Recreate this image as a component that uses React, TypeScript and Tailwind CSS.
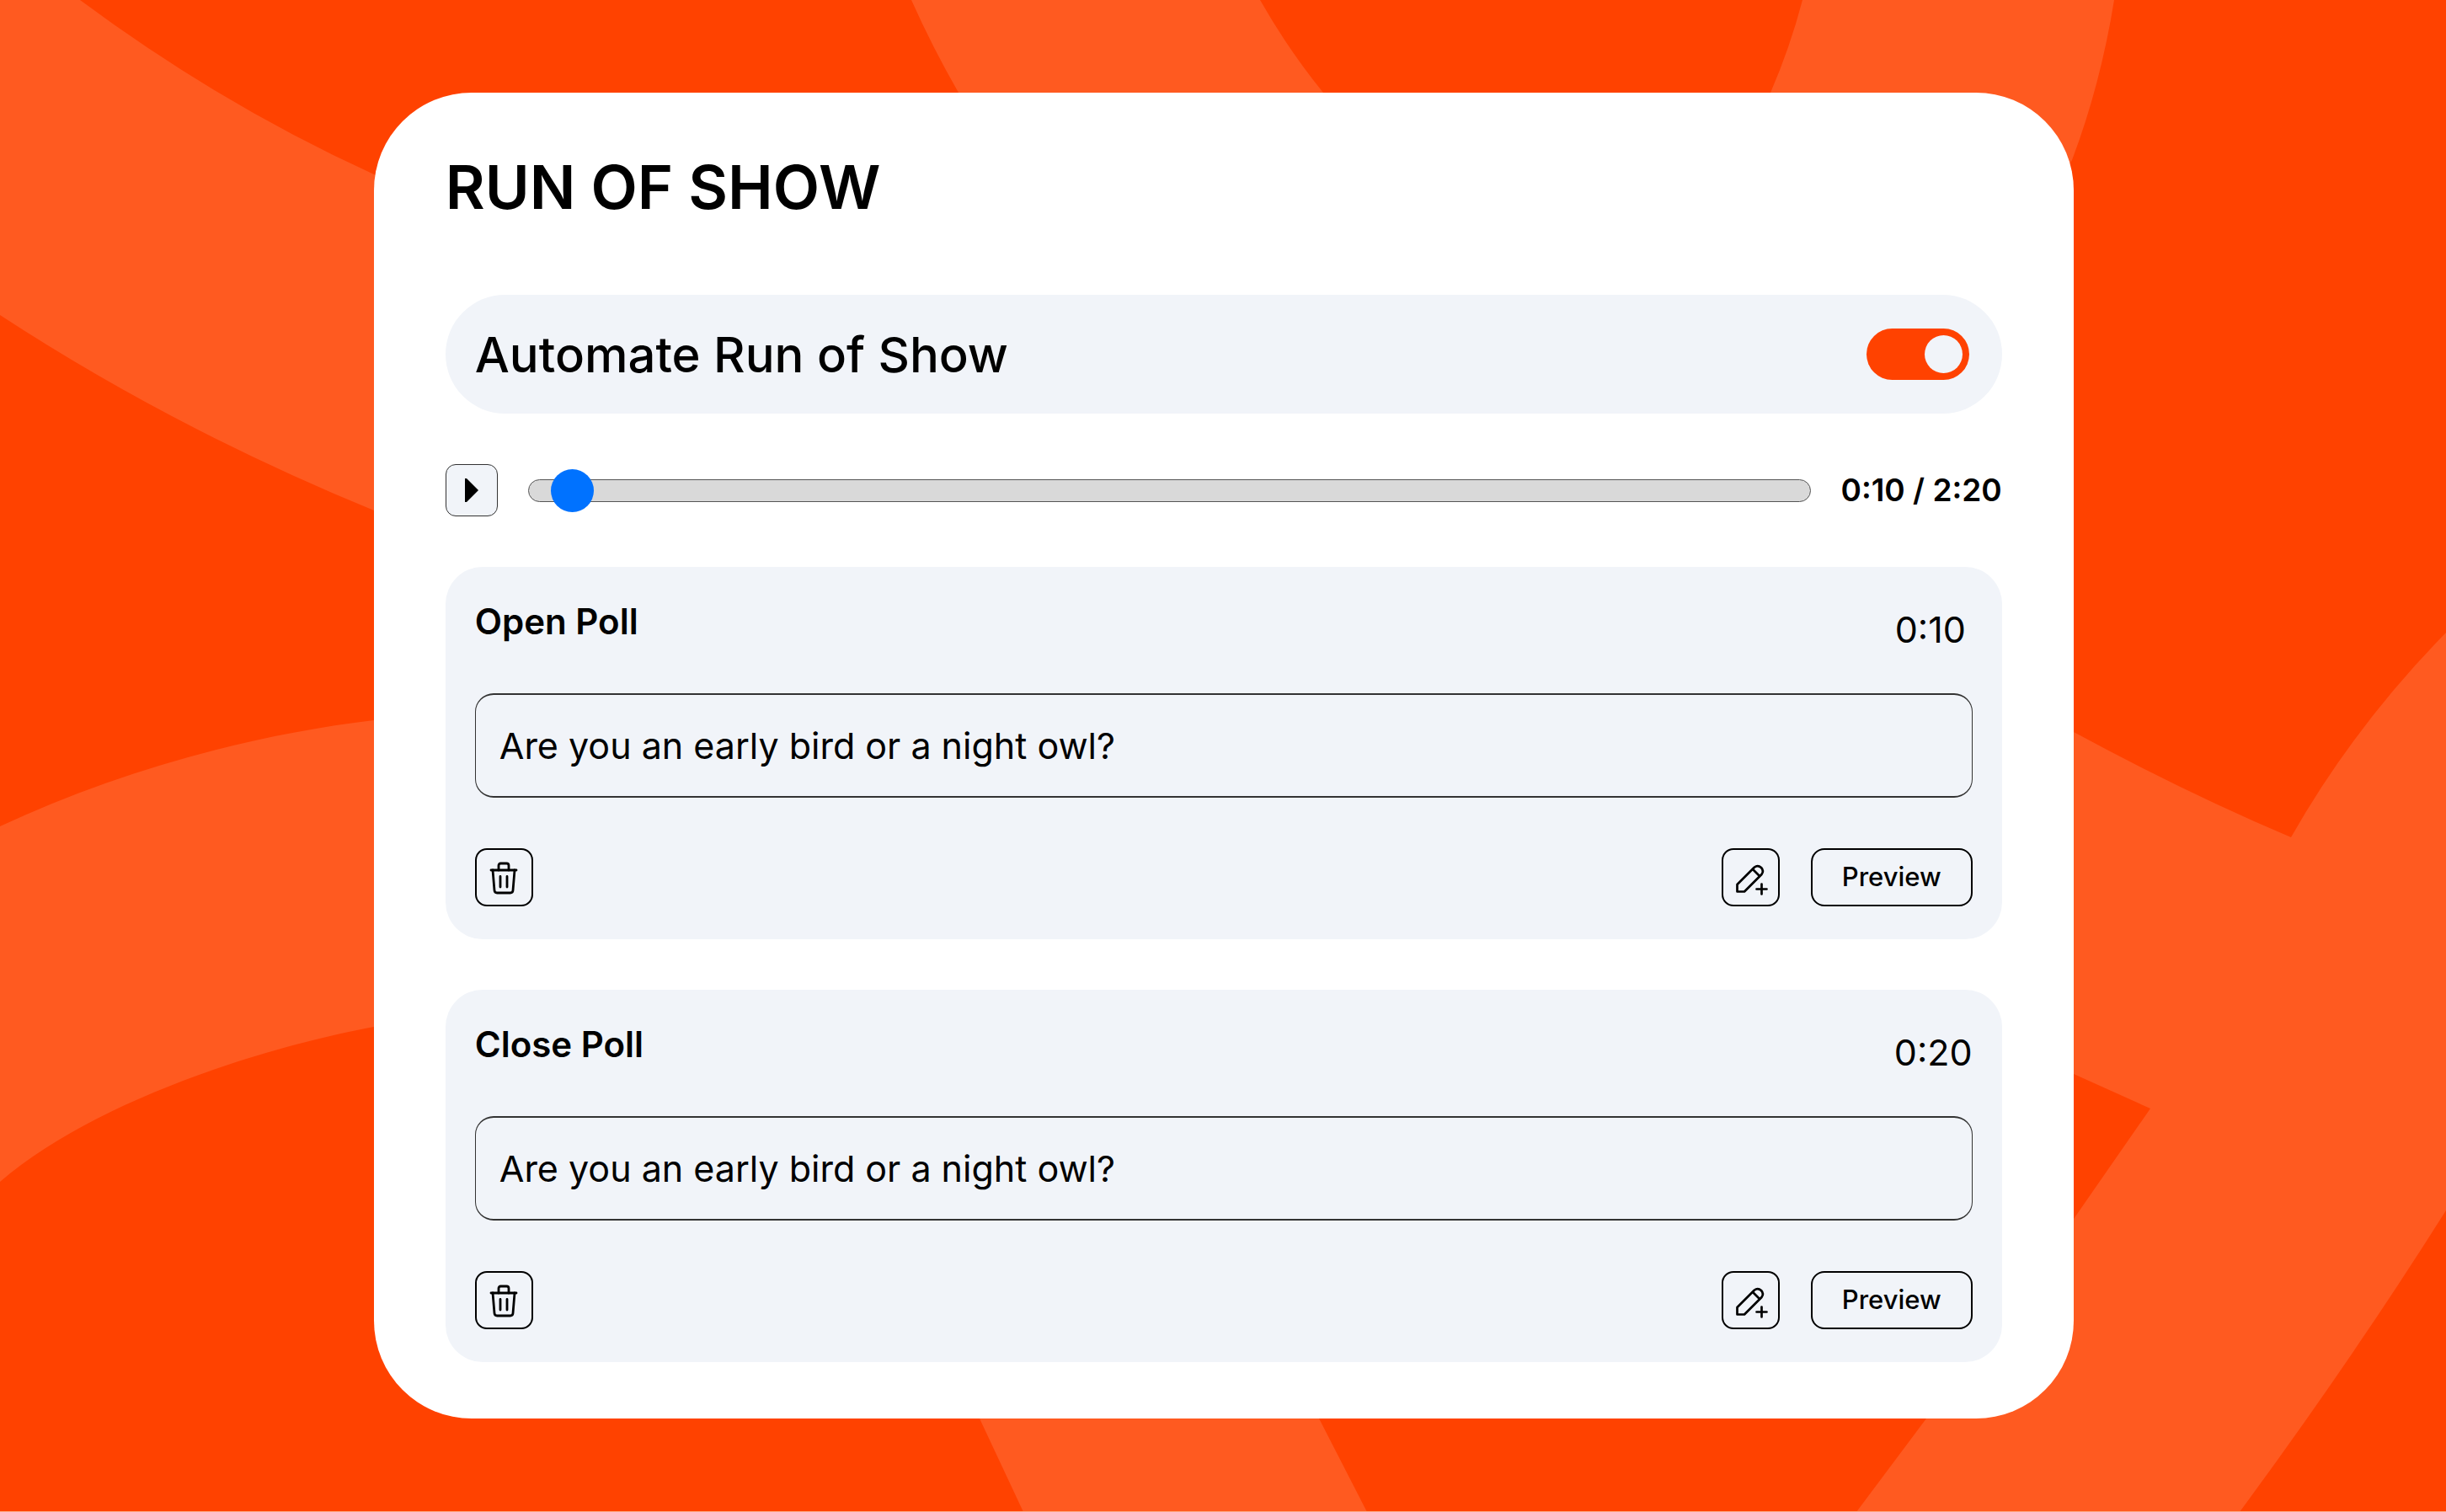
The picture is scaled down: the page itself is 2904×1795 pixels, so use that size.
import React from 'react';

interface Poll {
  id: string;
  title: string;
  time: string;
  question: string;
}

const polls: Poll[] = [
  { id: 'open', title: 'Open Poll', time: '0:10', question: 'Are you an early bird or a night owl?' },
  { id: 'close', title: 'Close Poll', time: '0:20', question: 'Are you an early bird or a night owl?' },
];

const Ribbons: React.FC = () => (
  <svg
    className="absolute inset-0 h-full w-full"
    viewBox="0 0 2904 1794"
    preserveAspectRatio="xMidYMid slice"
    fill="#ff5a20"
    aria-hidden="true"
  >
    <path d="M0 0H95Q262 124 444 207L500 230V632L444 606Q205 508 0 374Z" />
    <path d="M0 981C140 915 300 872 444 855L500 850V1208L444 1219C310 1244 110 1308 0 1403Z" />
    <path d="M1082 0H1496Q1529 58 1571 110L1600 150H1160L1138 110Q1107 56 1082 0Z" />
    <path d="M2140 0H2510Q2494 100 2460 190L2420 260H2050L2102 110Q2125 57 2140 0Z" />
    <path d="M1143 1640H1543L1566 1684L1623 1795H1215L1163 1684Z" />
    <path d="M2400 837L2462 869Q2595 941 2720 994Q2795 862 2904 751V1437Q2795 1610 2659 1795H2204L2287 1684L2462 1447L2553 1316L2462 1275L2400 1245Z" />
  </svg>
);

const TrashIcon: React.FC = () => (
  <svg width="36" height="40" viewBox="0 0 36 40" fill="none" stroke="currentColor" strokeWidth="2.8" strokeLinecap="round" strokeLinejoin="round" aria-hidden="true">
    <path d="M3 11H33" />
    <path d="M12 11V5.5Q12 3 14.5 3H21.5Q24 3 24 5.5V11" />
    <path d="M5 11L7 35Q7.2 38 10.2 38H25.8Q28.8 38 29 35L31 11" />
    <path d="M14 18.5V31M22 18.5V31" />
  </svg>
);

const EditIcon: React.FC = () => (
  <svg width="44" height="44" viewBox="-3.5 -5.5 44 44" fill="none" stroke="currentColor" strokeWidth="2.7" strokeLinecap="round" strokeLinejoin="round" aria-hidden="true">
    <path d="M3 33V24.5L23.5 4Q27.5 1 31.5 4.5Q35 8.5 32 12.5L11.5 33Z" />
    <path d="M21.5 6.5L29.5 14.5" />
    <path d="M32 24V36M26 30H38" />
  </svg>
);

const iconButton =
  'flex h-[69px] w-[69px] items-center justify-center rounded-[14px] border-2 border-black';

const PollCard: React.FC<{ poll: Poll }> = ({ poll }) => (
  <section className="rounded-[44px] bg-[#f1f4f9] px-[35px] py-[39px]">
    <div className="flex items-start justify-between">
      <label htmlFor={poll.id} className="text-[42px] leading-[52px] font-semibold">
        {poll.title}
      </label>
      <time className="min-w-[92px] text-[43px] leading-[70px]">{poll.time}</time>
    </div>
    <input
      id={poll.id}
      type="text"
      defaultValue={poll.question}
      className="mt-[41px] block h-[124px] w-full rounded-[22px] border border-y-2 border-[#333] bg-transparent px-[28px] text-[43px] outline-none"
    />
    <div className="mt-[60px] flex items-center justify-between">
      <button type="button" aria-label={`Delete ${poll.title}`} className={iconButton}>
        <TrashIcon />
      </button>
      <div className="flex items-center gap-[37px]">
        <button type="button" aria-label={`Edit ${poll.title}`} className={iconButton}>
          <EditIcon />
        </button>
        <button
          type="button"
          className="h-[69px] w-[192px] rounded-[16px] border-2 border-black text-[31px] font-medium"
        >
          Preview
        </button>
      </div>
    </div>
  </section>
);

const App: React.FC = () => {
  return (
    <div className="relative flex min-h-screen justify-center border-b border-[#ffa680] bg-[#ff4200] pt-[110px] pr-[15.23%] pb-[110px] pl-[15.28%] font-['Inter',sans-serif] text-black">
      <Ribbons />
      <main className="relative w-full rounded-[116px] bg-white px-[85px] pt-[68px] pb-[67px]">
        <h1 className="mb-[84px] text-[72px] leading-[88px] font-semibold">RUN OF SHOW</h1>

        <div className="flex flex-col gap-[60px]">
          <div className="flex h-[141px] items-center justify-between rounded-full bg-[#f1f4f9] pr-[39px] pl-[35px]">
            <label htmlFor="automate" className="text-[58px] leading-[70px] font-medium">
              Automate Run of Show
            </label>
            <input
              id="automate"
              type="checkbox"
              role="switch"
              defaultChecked
              className="flex h-[61px] w-[122px] appearance-none items-center rounded-full bg-gray-400 px-2 before:h-[45px] before:w-[45px] before:rounded-full before:bg-[#f1f4f9] checked:justify-end checked:bg-[#ff4200]"
            />
          </div>

          <div className="flex items-center">
            <button
              type="button"
              aria-label="Play"
              className="flex h-[62px] w-[62px] items-center justify-center rounded-[12px] border border-[#333] bg-[#f1f4f9]"
            >
              <svg width="16" height="28" viewBox="0 0 16 28" aria-hidden="true">
                <path d="M0 0H2L16 14L2 28H0Z" />
              </svg>
            </button>
            <input
              type="range"
              aria-label="Playback position"
              min={0}
              max={100}
              step={0.1}
              defaultValue={1.8}
              className="mr-[36px] ml-[36px] h-[27px] min-w-0 flex-1 appearance-none rounded-full border border-[#555] bg-[#d9d9d9] [&::-webkit-slider-thumb]:h-[51px] [&::-webkit-slider-thumb]:w-[51px] [&::-webkit-slider-thumb]:appearance-none [&::-webkit-slider-thumb]:rounded-full [&::-webkit-slider-thumb]:bg-[#0072ff]"
            />
            <span className="text-[37px] leading-[46px] font-semibold">0:10 / 2:20</span>
          </div>

          {polls.map((poll) => (
            <PollCard key={poll.id} poll={poll} />
          ))}
        </div>
      </main>
    </div>
  );
};

export default App;
